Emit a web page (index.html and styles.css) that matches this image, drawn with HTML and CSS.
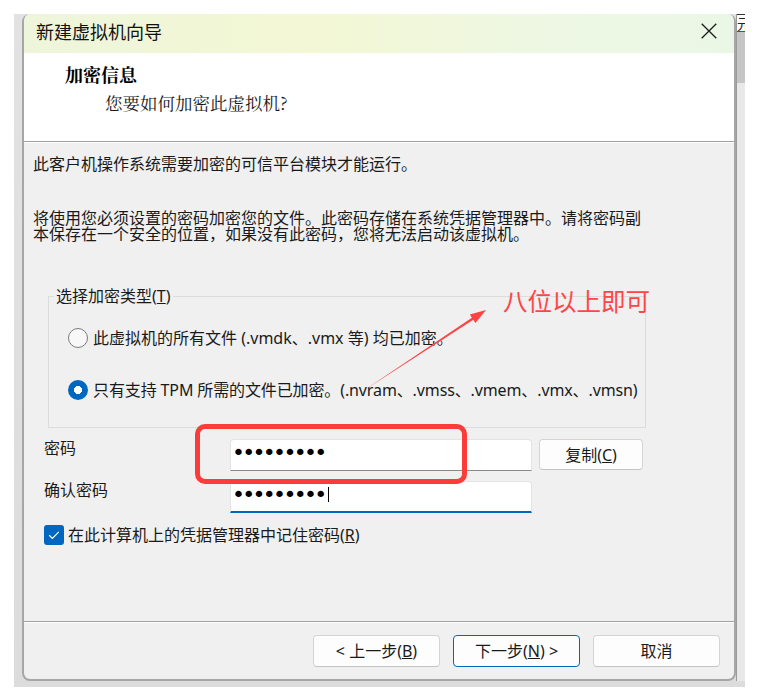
FILE: index.html
```html
<!DOCTYPE html>
<html lang="zh-CN">
<head>
<meta charset="utf-8">
<title>新建虚拟机向导</title>
<link rel="stylesheet" href="styles.css">
</head>
<body>
<div class="desktop">
  <div class="frame">
    <div class="window">
      <div class="titlebar">
        <span class="title">新建虚拟机向导</span>
        <svg class="close" width="16" height="16" viewBox="0 0 16 16"><path d="M0.7 0.7 L15.3 15.3 M15.3 0.7 L0.7 15.3" stroke="#1b1b1b" stroke-width="1.3" fill="none"/></svg>
      </div>
      <div class="header">
        <h1 class="h-title">加密信息</h1>
        <p class="h-sub">您要如何加密此虚拟机?</p>
      </div>
      <div class="sep"></div>
      <div class="content">
        <p class="para">此客户机操作系统需要加密的可信平台模块才能运行。</p>
        <p class="para para2">将使用您必须设置的密码加密您的文件。此密码存储在系统凭据管理器中。请将密码副<br>本保存在一个安全的位置，如果没有此密码，您将无法启动该虚拟机。</p>
        <fieldset class="group">
          <legend class="legend">选择加密类型(<u>T</u>)</legend>
          <div class="radio-row first">
            <span class="radio"></span>
            <span class="rtext">此虚拟机的所有文件 (.vmdk、.vmx 等) 均已加密。</span>
          </div>
          <div class="radio-row second">
            <span class="radio checked"></span>
            <span class="rtext tight">只有支持 TPM 所需的文件已加密。(.nvram、.vmss、.vmem、.vmx、.vmsn)</span>
          </div>
        </fieldset>
        <div class="form">
          <span class="flabel">密码</span>
          <div class="field"><span class="dots">•••••••••</span></div>
          <div class="btn copy">复制(<u>C</u>)</div>
          <span class="flabel">确认密码</span>
          <div class="field focused"><span class="dots">•••••••••</span><span class="caret"></span></div>
        </div>
        <div class="check-row">
          <span class="checkbox"><svg width="20" height="20" viewBox="0 0 20 20"><path d="M5.2 10.3 L8.4 13.4 L14.8 6.8" stroke="#fff" stroke-width="1.2" fill="none"/></svg></span>
          <span class="ctext">在此计算机上的凭据管理器中记住密码(<u>R</u>)</span>
        </div>
      </div>
      <div class="sep"></div>
      <div class="footer">
        <div class="btn nav">&lt; 上一步(<u>B</u>)</div>
        <div class="btn nav primary">下一步(<u>N</u>) &gt;</div>
        <div class="btn nav">取消</div>
      </div>
    </div>
    <div class="strip">
      <div class="strip-top"><span>元</span></div>
      <div class="strip-thumb"></div>
      <div class="strip-track"></div>
    </div>
  </div>

  <div class="mark-box"></div>
  <svg class="arrow" width="759" height="700" viewBox="0 0 759 700">
    <polygon points="363,391 471.9,317.8 469.8,314.6 486,310 475.4,323 473.3,319.8" fill="#ff4242"/>
  </svg>
  <div class="note">八位以上即可</div>
</div>
</body>
</html>
```

FILE: styles.css
```css
html, body {
  margin: 0;
  padding: 0;
  background: #ffffff;
}

body {
  font-family: "Noto Sans", "Noto Sans CJK SC", sans-serif;
  color: #1a1a1a;
  font-size: 16px;
}

.desktop {
  position: relative;
  width: 759px;
  height: 700px;
  box-sizing: border-box;
  padding: 14px 0 0 14px;
}

.frame {
  display: flex;
  width: 731px;
  box-sizing: border-box;
  padding: 0 0 6px 8px;
  background: linear-gradient(180deg, #e2e2e2 0%, #dcdcdc 100%);
}

.window {
  width: 714px;
  height: 667px;
  box-sizing: border-box;
  border: 2px solid #a6a6a6;
  border-top: none;
  border-radius: 8px;
  overflow: hidden;
  display: flex;
  flex-direction: column;
  background: #f0f0f0;
}

.titlebar {
  height: 39px;
  box-sizing: border-box;
  display: flex;
  align-items: center;
  padding: 0 17px 6px 12px;
  background: linear-gradient(90deg, #eef5db 0%, #f3f7d4 40%, #edf7e3 75%, #ebf7e6 100%);
}

.title {
  font-family: "Noto Sans CJK SC", sans-serif;
  font-size: 18px;
  line-height: 22px;
  color: #111;
}

.close {
  margin-left: auto;
  display: block;
}

.header {
  height: 88px;
  box-sizing: border-box;
  background: #ffffff;
  padding: 10px 0 0 41px;
}

.h-title {
  margin: 0;
  font-family: "Noto Serif CJK SC", "Noto Sans CJK SC", serif;
  font-size: 18px;
  line-height: 22px;
  font-weight: bold;
  color: #000;
}

.h-sub {
  margin: 7px 0 0 40px;
  font-family: "Noto Serif CJK SC", "Noto Sans CJK SC", serif;
  font-size: 17.5px;
  line-height: 22px;
  color: #1a1a1a;
}

.sep {
  height: 0;
  border-top: 1px solid #a0a0a0;
  border-bottom: 1px solid #ffffff;
}

.content {
  flex: 1;
  padding: 13px 0 0 9px;
  font-size: 16px;
  line-height: 16px;
}

.para {
  margin: 0;
  white-space: nowrap;
}

.para2 {
  margin-top: 38px;
}

.group {
  margin: 46px 0 0 15px;
  width: 598px;
  box-sizing: border-box;
  border: 1px solid #dcdcdc;
  padding: 0 0 27px 5px;
  min-inline-size: 0;
}

.legend {
  padding: 0 2px;
  font-size: 16px;
  line-height: 16px;
}

.radio-row {
  display: flex;
  align-items: center;
  gap: 5px;
  height: 20px;
  line-height: 20px;
  margin-left: 14px;
  white-space: nowrap;
}

.radio-row.first {
  margin-top: 24px;
}

.radio-row.second {
  margin-top: 32px;
}

.rtext.tight {
  letter-spacing: -0.12px;
}

.radio {
  width: 20px;
  height: 20px;
  box-sizing: border-box;
  border-radius: 50%;
  border: 1px solid #7a7a7a;
  background: #f8f8f8;
  flex: none;
}

.radio.checked {
  border: none;
  background: radial-gradient(circle, #ffffff 0 3.8px, #0067c0 4.3px);
}

.form {
  display: grid;
  grid-template-columns: 179px 302px 104px;
  grid-template-rows: 32px 32px;
  column-gap: 7px;
  row-gap: 10px;
  margin: 11px 0 0 11px;
}

.flabel {
  padding-top: 1px;
  line-height: 16px;
}

.field {
  box-sizing: border-box;
  background: #ffffff;
  border: 1px solid #e3e3e3;
  border-bottom: 1px solid #8a8a8a;
  border-radius: 4px 4px 0 0;
  display: flex;
  align-items: center;
  padding: 0 0 5px 1px;
}

.field.focused {
  border-bottom: 2px solid #0067c0;
  padding-bottom: 4px;
}

.dots {
  font-family: "DejaVu Sans", sans-serif;
  font-size: 22px;
  line-height: 20px;
  letter-spacing: -2.7px;
  color: #000;
}

.caret {
  display: inline-block;
  width: 1px;
  height: 15px;
  background: #000;
  margin-left: 3px;
}

.btn {
  box-sizing: border-box;
  display: flex;
  align-items: center;
  justify-content: center;
  background: #fdfdfd;
  border: 1px solid #d4d4d4;
  border-bottom-color: #c4c4c4;
  border-radius: 4px;
  color: #1a1a1a;
  font-size: 16px;
  line-height: 16px;
  white-space: nowrap;
}

.copy {
  height: 31px;
}

.check-row {
  display: flex;
  align-items: center;
  gap: 4px;
  margin: 12px 0 0 11px;
  height: 20px;
  line-height: 20px;
}

.checkbox {
  width: 20px;
  height: 20px;
  border-radius: 3px;
  background: #0067c0;
  flex: none;
}

.checkbox svg {
  display: block;
}

.footer {
  height: 56px;
  box-sizing: border-box;
  display: flex;
  justify-content: flex-end;
  align-items: flex-start;
  gap: 13px;
  padding: 12px 14px 0 0;
}

.nav {
  width: 127px;
  height: 32px;
}

.primary {
  border: 1px solid #0067c0;
}

.strip {
  width: 9px;
  height: 667px;
  display: flex;
  flex-direction: column;
  border-left: 1px solid #9a9a9a;
  box-sizing: border-box;
}

.strip-top {
  height: 18px;
  box-sizing: border-box;
  background: #ffffff;
  border-top: 1px solid #333;
  border-bottom: 1px solid #2d5a9a;
  overflow: hidden;
  font-family: "Noto Sans CJK SC", sans-serif;
  font-size: 14px;
  line-height: 16px;
  color: #222;
  white-space: nowrap;
}

.strip-thumb {
  height: 51px;
  background: #c6c6c6;
}

.strip-track {
  flex: 1;
  background: #e8e8e8;
}

.mark-box {
  position: absolute;
  left: 195px;
  top: 424px;
  width: 272px;
  height: 60px;
  box-sizing: border-box;
  border: 5px solid #fc3b3b;
  border-radius: 10px;
}

.arrow {
  position: absolute;
  left: 0;
  top: 0;
  pointer-events: none;
}

.note {
  position: absolute;
  left: 503px;
  top: 289px;
  font-family: "Noto Sans CJK SC", sans-serif;
  font-size: 24.5px;
  line-height: 24.5px;
  color: #ff4646;
  white-space: nowrap;
}
```
